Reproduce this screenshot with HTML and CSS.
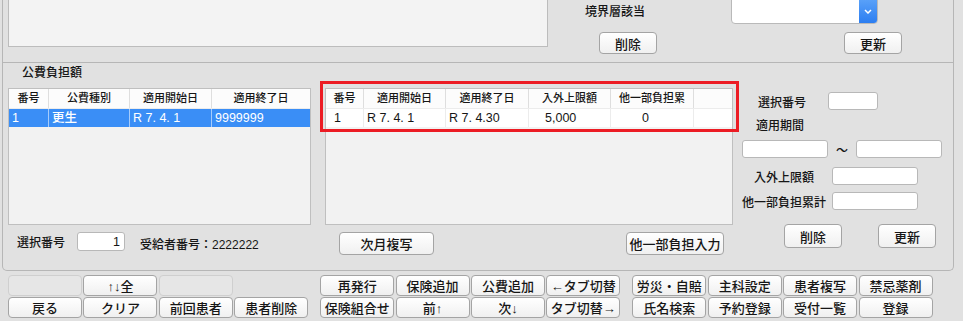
FILE: index.html
```html
<!DOCTYPE html>
<html lang="ja">
<head>
    <meta charset="UTF-8">
    <title>公費負担額</title>
    <link rel="stylesheet" href="styles.css">
</head>
<body>
    <div class="frame">
        <div class="top-panel">
            <div class="memo"></div>
            <div class="top-side">
                <div class="top-row">
                    <span class="top-label">境界層該当</span>
                    <div class="select">
                        <span class="select-arrow">
                            <svg width="8" height="5" viewBox="0 0 8 5"><path d="M1 1 L4 4 L7 1" fill="none" stroke="#fff" stroke-width="1.5"/></svg>
                        </span>
                    </div>
                </div>
                <div class="top-buttons">
                    <button class="btn btn-top">削除</button>
                    <button class="btn btn-top">更新</button>
                </div>
            </div>
        </div>

        <div class="bottom-panel">
            <div class="section-title">公費負担額</div>
            <div class="columns">
                <div class="col-left">
                    <div class="grid grid-left">
                        <div class="row head">
                            <div class="cell l1">番号</div>
                            <div class="cell l2">公費種別</div>
                            <div class="cell l3">適用開始日</div>
                            <div class="cell l4">適用終了日</div>
                        </div>
                        <div class="row selected">
                            <div class="cell l1">1</div>
                            <div class="cell l2">更生</div>
                            <div class="cell l3">R 7. 4. 1</div>
                            <div class="cell l4">9999999</div>
                        </div>
                    </div>
                    <div class="left-foot">
                        <span class="foot-label">選択番号</span>
                        <input class="field field-no" value="1" readonly>
                        <span class="recipient">受給者番号：2222222</span>
                    </div>
                </div>

                <div class="col-mid">
                    <div class="grid grid-mid">
                        <div class="row head">
                            <div class="cell m1">番号</div>
                            <div class="cell m2">適用開始日</div>
                            <div class="cell m3">適用終了日</div>
                            <div class="cell m4">入外上限額</div>
                            <div class="cell m5">他一部負担累</div>
                            <div class="cell m6"></div>
                        </div>
                        <div class="row data">
                            <div class="cell m1 c-no">1</div>
                            <div class="cell m2">R 7. 4. 1</div>
                            <div class="cell m3">R 7. 4.30</div>
                            <div class="cell m4 c-limit">5,000</div>
                            <div class="cell m5 c-sum">0</div>
                            <div class="cell m6"></div>
                        </div>
                    </div>
                    <div class="mid-foot">
                        <button class="btn btn-copy">次月複写</button>
                        <button class="btn btn-other">他一部負担入力</button>
                    </div>
                    <div class="highlight"></div>
                </div>

                <div class="col-right">
                    <div class="form-row row-sel">
                        <span class="form-label">選択番号</span>
                        <input class="field field-sel" readonly>
                    </div>
                    <div class="form-title">適用期間</div>
                    <div class="form-row row-period">
                        <input class="field field-date" readonly>
                        <span class="tilde">～</span>
                        <input class="field field-date" readonly>
                    </div>
                    <div class="form-row row-limit">
                        <span class="form-label lbl-limit">入外上限額</span>
                        <input class="field field-amount" readonly>
                    </div>
                    <div class="form-row row-sum">
                        <span class="form-label lbl-sum">他一部負担累計</span>
                        <input class="field field-amount" readonly>
                    </div>
                    <div class="form-row row-actions">
                        <button class="btn btn-form">削除</button>
                        <button class="btn btn-form">更新</button>
                    </div>
                </div>
            </div>
        </div>
    </div>

    <div class="toolbar">
        <div class="group">
            <button class="btn btn-bar" disabled></button>
            <button class="btn btn-bar">↑↓全</button>
            <button class="btn btn-bar" disabled></button>
            <span></span>
            <button class="btn btn-bar">戻る</button>
            <button class="btn btn-bar">クリア</button>
            <button class="btn btn-bar">前回患者</button>
            <button class="btn btn-bar">患者削除</button>
        </div>
        <div class="group">
            <button class="btn btn-bar">再発行</button>
            <button class="btn btn-bar">保険追加</button>
            <button class="btn btn-bar">公費追加</button>
            <button class="btn btn-bar">←タブ切替</button>
            <button class="btn btn-bar">保険組合せ</button>
            <button class="btn btn-bar">前↑</button>
            <button class="btn btn-bar">次↓</button>
            <button class="btn btn-bar">タブ切替→</button>
        </div>
        <div class="group">
            <button class="btn btn-bar">労災・自賠</button>
            <button class="btn btn-bar">主科設定</button>
            <button class="btn btn-bar">患者複写</button>
            <button class="btn btn-bar">禁忌薬剤</button>
            <button class="btn btn-bar">氏名検索</button>
            <button class="btn btn-bar">予約登録</button>
            <button class="btn btn-bar">受付一覧</button>
            <button class="btn btn-bar">登録</button>
        </div>
    </div>
</body>
</html>
```

FILE: styles.css
```css
* {
    box-sizing: border-box;
}

body {
    margin: 0;
    background: #e1e1e1;
    font-family: "Liberation Sans", "Noto Sans CJK JP", sans-serif;
    font-size: 12px;
    font-weight: 500;
    color: #161616;
    overflow: hidden;
}

/* outer frame */
.frame {
    width: 952px;
    margin-left: 2px;
    border: 1px solid #b6b6b6;
    border-top: none;
    border-radius: 0 0 5px 5px;
}

.top-panel {
    display: flex;
    height: 63px;
    border-bottom: 1px solid #b6b6b6;
}

.memo {
    width: 540px;
    height: 57px;
    margin: -10px 0 0 5px;
    background: #f3f3f3;
    border: 1px solid #bcbcbc;
}

.top-side {
    flex: 1;
}

.top-row {
    display: flex;
    align-items: flex-start;
    margin-top: -10px;
}

.top-label {
    width: 60px;
    margin: 14px 0 0 37px;
    line-height: 16px;
}

.select {
    display: flex;
    justify-content: flex-end;
    width: 147px;
    height: 34px;
    margin-left: 86px;
    background: #fff;
    border: 1px solid #b9b9b9;
    border-radius: 4px;
    overflow: hidden;
}

.select-arrow {
    display: flex;
    align-items: flex-end;
    justify-content: center;
    width: 18px;
    padding-bottom: 9px;
    background: linear-gradient(#6aaefb, #2c7ef1);
}

.select-arrow svg {
    display: block;
}

.top-buttons {
    display: flex;
    gap: 187px;
    margin: 8px 0 0 51px;
}

/* buttons */
.btn {
    padding: 0;
    font-family: inherit;
    font-size: 13px;
    font-weight: 500;
    color: #161616;
    background: linear-gradient(#ffffff, #f0f0f0);
    border: 1px solid #a4a4a4;
    border-radius: 4px;
    white-space: nowrap;
}

.btn:disabled {
    background: #e6e6e6;
    border-color: #cfcfcf;
}

.btn-top {
    width: 58px;
    height: 22px;
}

/* bottom panel */
.bottom-panel {
    height: 207px;
}

.section-title {
    padding-left: 19px;
    line-height: 20px;
}

.columns {
    display: flex;
    align-items: flex-start;
    margin-top: 5px;
}

.col-left {
    width: 303px;
    margin-left: 5px;
}

.col-mid {
    position: relative;
    width: 408px;
    margin-left: 14px;
}

.col-right {
    width: 200px;
    margin-left: 9px;
}

/* list grids */
.grid {
    height: 137px;
    background: #f2f2f2;
    border: 1px solid #bfbfbf;
}

.row {
    display: flex;
}

.cell {
    overflow: hidden;
    white-space: pre;
    border-right: 1px solid #dedede;
}

.head {
    height: 20px;
    background: #fcfcfc;
    border-bottom: 1px solid #ececec;
}

.head .cell {
    font-size: 11px;
    line-height: 19px;
    text-align: center;
}

.selected,
.data {
    height: 18px;
    font-size: 12.5px;
    line-height: 18px;
}

.selected {
    background: #3a8ef6;
    color: #fff;
}

.selected .cell {
    padding-left: 3px;
    border-right-color: rgba(255, 255, 255, 0.55);
}

.data {
    background: #fff;
}

.data .cell {
    padding-left: 3px;
    border-right-color: #ececec;
}

.l1 { width: 40px; }
.l2 { width: 81px; }
.l3 { width: 82px; }
.l4 { width: 98px; border-right: none; }

.m1 { width: 38px; }
.m2 { width: 82px; }
.m3 { width: 83px; }
.m4 { width: 82px; }
.m5 { width: 83px; }
.m6 { width: 38px; border-right: none; }

.data .c-no { padding-left: 8px; }
.data .c-limit { padding-left: 16px; }
.data .c-sum { padding-left: 31px; }

/* inputs */
.field {
    height: 18px;
    padding: 0 4px;
    font-family: inherit;
    font-size: 12.5px;
    color: #161616;
    background: #fff;
    border: 1px solid #b8b8b8;
    border-radius: 3px;
    outline: none;
}

.left-foot {
    display: flex;
    align-items: center;
    height: 19px;
    margin-top: 7px;
}

.foot-label {
    margin-left: 9px;
}

.field-no {
    width: 48px;
    height: 19px;
    margin-left: 12px;
    text-align: right;
}

.recipient {
    margin-left: 15px;
    margin-top: 3px;
}

.mid-foot {
    display: flex;
    justify-content: space-between;
    margin-top: 7px;
    padding: 0 9px 0 14px;
}

.btn-copy {
    width: 95px;
    height: 23px;
}

.btn-other {
    width: 98px;
    height: 23px;
}

/* annotation frame */
.highlight {
    position: absolute;
    left: -5px;
    top: -7px;
    width: 419px;
    height: 51px;
    border: 3px solid #ec1c24;
}

/* right form */
.form-row {
    display: flex;
    align-items: center;
}

.row-sel {
    margin-top: 4px;
}

.row-sel .form-label {
    width: 86px;
    padding-left: 16px;
}

.field-sel {
    width: 50px;
}

.form-title {
    margin-top: 8px;
    padding-left: 14px;
    line-height: 16px;
}

.row-period {
    justify-content: space-between;
    margin-top: 6px;
}

.field-date {
    width: 86px;
}

.tilde {
    font-size: 12px;
}

.row-limit {
    margin-top: 9px;
}

.row-sum {
    margin-top: 7px;
}

.lbl-limit {
    width: 90px;
    padding-left: 12px;
}

.lbl-sum {
    width: 90px;
}

.field-amount {
    width: 86px;
}

.row-actions {
    margin-top: 14px;
    padding-left: 42px;
    gap: 36px;
}

.btn-form {
    width: 58px;
    height: 24px;
}

/* bottom toolbar */
.toolbar {
    display: flex;
    gap: 12px;
    margin: 4px 0 0 8px;
}

.group {
    display: grid;
    grid-template-columns: repeat(4, 74px);
    grid-auto-rows: 21px;
    gap: 1px 1.4px;
}

.btn-bar {
    height: 21px;
}
```
